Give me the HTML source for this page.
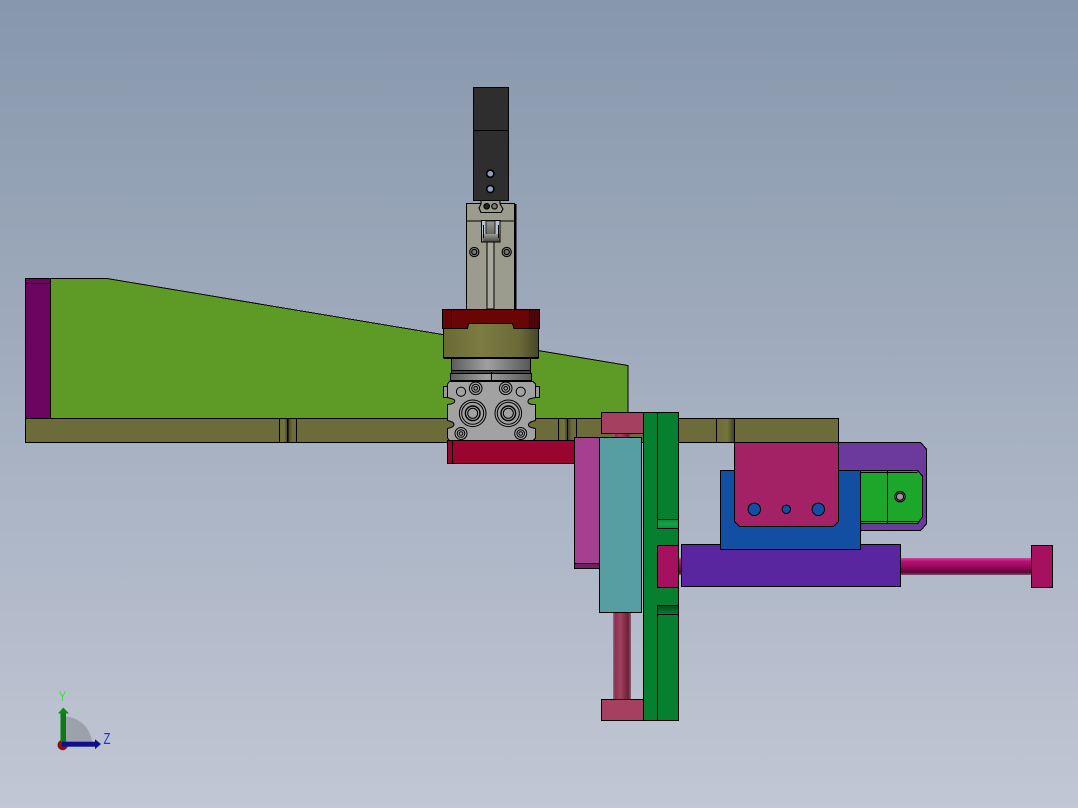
<!DOCTYPE html>
<html><head><meta charset="utf-8"><title>CAD view</title>
<style>
html,body{margin:0;padding:0;width:1078px;height:808px;overflow:hidden}
svg{display:block}
text{font-family:"Liberation Sans",sans-serif}
</style></head><body>
<svg width="1078" height="808" viewBox="0 0 1078 808" xmlns="http://www.w3.org/2000/svg">
<defs>
<linearGradient id="bg" x1="0" y1="0" x2="0" y2="1"><stop offset="0" stop-color="#8797ac"/><stop offset="1" stop-color="#c1c7d4"/></linearGradient>
<linearGradient id="cyl" x1="0" y1="0" x2="1" y2="0"><stop offset="0" stop-color="#5c5c5c"/><stop offset=".45" stop-color="#a0a0a0"/><stop offset="1" stop-color="#585858"/></linearGradient>
<linearGradient id="olv" x1="0" y1="0" x2="1" y2="0"><stop offset="0" stop-color="#6a6a36"/><stop offset=".4" stop-color="#7b7b42"/><stop offset=".8" stop-color="#6a6a38"/><stop offset="1" stop-color="#46462a"/></linearGradient>
<linearGradient id="slot" x1="0" y1="0" x2="1" y2="0"><stop offset="0" stop-color="#6c6c3a"/><stop offset=".6" stop-color="#74743e"/><stop offset="1" stop-color="#3f3f22"/></linearGradient>
<linearGradient id="slot2" x1="0" y1="0" x2="1" y2="0"><stop offset="0" stop-color="#3f3f22"/><stop offset=".5" stop-color="#6c6c3a"/><stop offset="1" stop-color="#6c6c3a"/></linearGradient>
<linearGradient id="rodv" x1="0" y1="0" x2="1" y2="0"><stop offset="0" stop-color="#a56a80"/><stop offset=".12" stop-color="#8a3050"/><stop offset=".4" stop-color="#a3405f"/><stop offset=".85" stop-color="#6c2038"/><stop offset="1" stop-color="#8a6072"/></linearGradient>
<linearGradient id="rodh" x1="0" y1="0" x2="0" y2="1"><stop offset="0" stop-color="#c84a94"/><stop offset=".2" stop-color="#b80f78"/><stop offset=".45" stop-color="#a00a60"/><stop offset=".85" stop-color="#5c0638"/><stop offset="1" stop-color="#7a5070"/></linearGradient>
<linearGradient id="gu" x1="0" y1="0" x2="0" y2="1"><stop offset="0" stop-color="#0a8a36"/><stop offset=".5" stop-color="#12a644"/><stop offset="1" stop-color="#0a8a36"/></linearGradient>
<linearGradient id="gd" x1="0" y1="0" x2="0" y2="1"><stop offset="0" stop-color="#034a1c"/><stop offset="1" stop-color="#078030"/></linearGradient>
<linearGradient id="clev" x1="0" y1="0" x2="0" y2="1"><stop offset="0" stop-color="#9a9a92"/><stop offset="1" stop-color="#4a4a46"/></linearGradient>
</defs>
<rect width="1078" height="808" fill="url(#bg)"/>

<g stroke="#000" stroke-width="1" shape-rendering="crispEdges">
<polygon points="50.5,278.5 107,278.5 628,365.5 628,418.5 50.5,418.5" fill="#5d9a26"/>
<rect x="25.5" y="278.5" width="25" height="140" fill="#6b0560"/>
<line x1="25.5" y1="283.5" x2="50.5" y2="283.5"/>
<polygon points="838,442.5 920.5,442.5 926.5,449 926.5,524 920.5,530.5 860,530.5 838,500" fill="#6b3a9c"/>
<rect x="25.5" y="418.5" width="813" height="24" fill="#6c6c3a"/>
<rect x="279.5" y="418.5" width="8" height="24" fill="url(#slot)"/>
<rect x="288" y="418.5" width="8.5" height="24" fill="url(#slot2)"/>
<rect x="558.5" y="418.5" width="9" height="24" fill="url(#slot)"/>
<rect x="567.5" y="418.5" width="9" height="24" fill="url(#slot2)"/>
<rect x="716.5" y="418.5" width="18" height="24" fill="url(#slot)"/>
<rect x="447.5" y="440.5" width="128" height="23" fill="#99052f"/>
<line x1="452.5" y1="441" x2="452.5" y2="463"/>
<rect x="613" y="433" width="18" height="5" fill="url(#rodv)" stroke="none"/>
<rect x="613" y="612" width="18" height="88" fill="url(#rodv)" stroke="none"/>
<rect x="678" y="558" width="4" height="17" fill="url(#rodh)" stroke="none"/>
<rect x="900" y="558" width="132" height="17" fill="url(#rodh)" stroke="none"/>
<rect x="574.5" y="437.5" width="25" height="126" fill="#a4408f"/>
<rect x="574.5" y="563.5" width="25" height="5" fill="#70205f"/>
<rect x="601.5" y="412.5" width="42" height="21" fill="#a54060"/>
<rect x="601.5" y="699.5" width="42" height="21" fill="#a54060"/>
<rect x="643.5" y="412.5" width="35" height="308" fill="#06802e"/>
<line x1="657.5" y1="412.5" x2="657.5" y2="528.5"/>
<line x1="657.5" y1="605.5" x2="657.5" y2="720.5"/>
<rect x="657.5" y="519.5" width="21" height="9" fill="url(#gu)"/>
<rect x="657.5" y="605.5" width="21" height="9" fill="url(#gd)"/>
<rect x="657.5" y="545.5" width="21" height="42" fill="#a5105f"/>
<rect x="599.5" y="437.5" width="42" height="175" fill="#569ea2"/>
<rect x="681.5" y="544.5" width="219" height="42" fill="#5a26a0"/>
<polygon points="860.5,470.5 917.5,470.5 922.5,476 922.5,517 917.5,523.5 860.5,523.5" fill="#1ca62a"/>
<line x1="860.5" y1="472.5" x2="917.5" y2="472.5"/>
<line x1="860.5" y1="521.5" x2="917.5" y2="521.5"/>
<line x1="887.5" y1="470.5" x2="887.5" y2="523.5"/>
<rect x="720.5" y="470.5" width="140" height="79" fill="#124fa3"/>
<polygon points="734.5,442.5 838.5,442.5 838.5,521.5 833.5,526.5 739.5,526.5 734.5,521.5" fill="#a32266"/>
<rect x="1031.5" y="545.5" width="21" height="42" fill="#a5105f"/>
</g>
<g stroke="#000" stroke-width="1">
<circle cx="754.3" cy="509.3" r="6.2" fill="#124fa3"/>
<circle cx="786.3" cy="509.3" r="4.2" fill="#124fa3"/>
<circle cx="818.3" cy="509.3" r="6.2" fill="#124fa3"/>
<circle cx="900" cy="496.7" r="5.2" fill="#777"/>
<circle cx="900" cy="496.7" r="3.6" fill="#999"/>
</g>

<g stroke="#000" stroke-width="1" shape-rendering="crispEdges">
<rect x="473.5" y="87.5" width="35" height="113" fill="#2e2e2e"/>
<line x1="473.5" y1="130.5" x2="508.5" y2="130.5"/>
<rect x="466.5" y="203.5" width="48" height="106" fill="#9b9b8e"/>
<rect x="515" y="204" width="1.5" height="105" fill="#000" stroke="none"/>
<line x1="466.5" y1="221" x2="515" y2="221"/>
<rect x="487" y="241" width="7" height="68" fill="#a8a89c"/>
<rect x="481.5" y="220.5" width="18.5" height="21.5" fill="#b8c4d4"/>
<rect x="486" y="221" width="9" height="20" fill="url(#clev)" stroke="#222"/>
<rect x="482.5" y="234" width="17" height="7.5" fill="url(#clev)" stroke="none"/>
<line x1="483.5" y1="225" x2="483.5" y2="238"/>
<line x1="498.5" y1="225" x2="498.5" y2="238"/>
</g>
<g stroke="#000" stroke-width="1.1">
<polygon points="481,200.5 500,200.5 500,204 503,209 501,212.5 481,212.5 479,208 481,204" fill="#9b9b8e"/>
<circle cx="486.7" cy="206.3" r="2.8" fill="#222"/>
<circle cx="494.5" cy="206.3" r="2.8" fill="#777"/>
<circle cx="490.3" cy="173.7" r="3.6" fill="#8fa0b8" stroke-width="1.6"/>
<circle cx="490.3" cy="189" r="3.6" fill="#8fa0b8" stroke-width="1.6"/>
<circle cx="474.3" cy="252" r="4.6" fill="#8a8a80"/><circle cx="474.3" cy="252" r="2.6" fill="#777"/>
<circle cx="506.7" cy="252" r="4.6" fill="#8a8a80"/><circle cx="506.7" cy="252" r="2.6" fill="#777"/>
</g>

<g stroke="#000" stroke-width="1" shape-rendering="crispEdges">
<rect x="451.5" y="358.5" width="79" height="13" fill="url(#cyl)"/>
<polygon points="443.5,328.5 467.5,328.5 468.5,323.5 512.5,323.5 514,328.5 538.5,328.5 538.5,357.5 443.5,357.5" fill="url(#olv)"/>
<line x1="443.5" y1="358.5" x2="538.5" y2="358.5"/>
<polygon points="442.5,309.5 539.5,309.5 539.5,328.5 514,328.5 512.5,323.5 468.5,323.5 467.5,328.5 442.5,328.5" fill="#6a0505"/>
<rect x="529.5" y="309.5" width="10" height="19" fill="#4c0508"/>
<line x1="451.5" y1="309.5" x2="451.5" y2="328.5"/>
<rect x="451.5" y="370.5" width="79" height="3" fill="#444"/>
<rect x="450.5" y="373.5" width="81" height="7" fill="url(#cyl)"/>
<line x1="491.5" y1="372" x2="491.5" y2="381"/>
<rect x="443.5" y="386.5" width="5" height="11" fill="#9a9a9a"/>
<rect x="534.5" y="386.5" width="5" height="11" fill="#9a9a9a"/>
</g>
<g stroke="#000" stroke-width="1">
<path d="M449.5,381.5H533L535.5,384V397.5L531,398.5C528,399 527,402 529,403.5L532,404.5L535.5,404.5V420.5L532,421.5C528,423 527,426 531,427.5L535.5,428.5V438L533,440.5H449.5L447.5,438V428.5L451,427.5C455,426 455,423 451,421.5L447.5,420.5V404.5L451,404C456,402.5 456,399.5 451,398.5L447.5,397.5V384Z" fill="#a2a2a2"/>
<g fill="none">
<circle cx="472.7" cy="413.3" r="13.3"/><circle cx="472.7" cy="413.3" r="11"/><circle cx="472.7" cy="413.3" r="7.3" stroke-width="1.4"/><circle cx="472.7" cy="413.3" r="5"/>
<circle cx="508.3" cy="413.3" r="13.3"/><circle cx="508.3" cy="413.3" r="11"/><circle cx="508.3" cy="413.3" r="7.3" stroke-width="1.4"/><circle cx="508.3" cy="413.3" r="5"/>
<circle cx="475.7" cy="388.3" r="6.3"/><circle cx="475.7" cy="388.3" r="4"/><circle cx="475.7" cy="388.3" r="1.8"/>
<circle cx="505.7" cy="388.3" r="6.3"/><circle cx="505.7" cy="388.3" r="4"/><circle cx="505.7" cy="388.3" r="1.8"/>
<circle cx="461" cy="391.7" r="4.6"/>
<circle cx="520.7" cy="391.7" r="4.6"/>
<circle cx="461" cy="433.5" r="6"/><circle cx="461" cy="433.5" r="3.8"/><circle cx="461" cy="433.5" r="1.8"/>
<circle cx="520.7" cy="433.5" r="6"/><circle cx="520.7" cy="433.5" r="3.8"/><circle cx="520.7" cy="433.5" r="1.8"/>
</g>
</g>

<path d="M64,716.5A28,28 0 0 1 92,743H64Z" fill="#9ca2ac"/>
<circle cx="62.7" cy="745" r="5.2" fill="#8c1010"/>
<rect x="60.5" y="713" width="5.5" height="29" fill="#0c7a14"/>
<polygon points="58,713.5 63.3,707.5 69,713.5" fill="#0c8a14"/>
<rect x="62" y="741.7" width="34" height="5" fill="#10108c"/>
<polygon points="95,739.3 101,744 95,749.3" fill="#10108c"/>
<text x="59" y="701" font-size="14" textLength="7" lengthAdjust="spacingAndGlyphs" fill="#3ce03c">Y</text>
<text x="103.5" y="744" font-size="16" textLength="7" lengthAdjust="spacingAndGlyphs" fill="#2030f0">Z</text>
</svg>
</body></html>
